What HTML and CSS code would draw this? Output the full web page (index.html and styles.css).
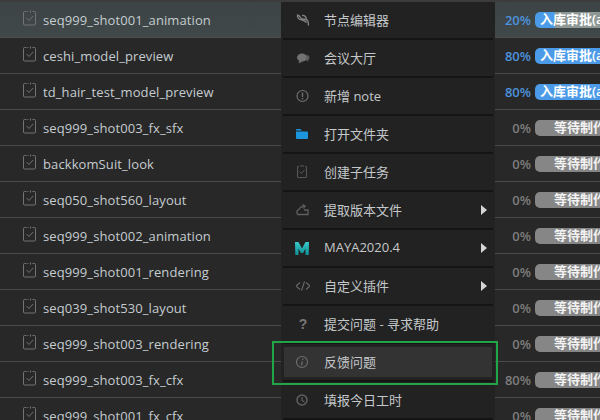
FILE: index.html
```html
<!DOCTYPE html>
<html lang="zh-CN">
<head>
    <meta charset="UTF-8">
    <title>任务列表</title>
    <link rel="stylesheet" href="styles.css">
</head>
<body>
    <svg class="defs">
        <symbol id="taskIcon" viewBox="0 0 13 16">
            <path d="M3.500 1.500H1.500a1 1 0 0 0-1 1v11.500a1 1 0 0 0 1 1h10a1 1 0 0 0 1-1V2.500a1 1 0 0 0-1-1H9.500M4.500 1.500h1M7.500 .5v2M3.500 8l2.500 2.500 4-4.500" fill="none" stroke="currentColor"/>
        </symbol>
        <linearGradient id="mayaFill" x1="0" y1="0" x2="0" y2="1">
            <stop offset="0" stop-color="#3cc8ca"/>
            <stop offset="1" stop-color="#0b8f96"/>
        </linearGradient>
    </svg>

    <div class="taskList">
        <div class="taskRow active"><svg class="taskIcon"><use href="#taskIcon"/></svg><span class="taskName">seq999_shot001_animation</span><span class="percent blue">20%</span><span class="pill partial">入库审批(a</span></div>
        <div class="taskRow"><svg class="taskIcon"><use href="#taskIcon"/></svg><span class="taskName">ceshi_model_preview</span><span class="percent blue">80%</span><span class="pill blueFill">入库审批(a</span></div>
        <div class="taskRow"><svg class="taskIcon"><use href="#taskIcon"/></svg><span class="taskName">td_hair_test_model_preview</span><span class="percent blue">80%</span><span class="pill blueFill">入库审批(a</span></div>
        <div class="taskRow"><svg class="taskIcon"><use href="#taskIcon"/></svg><span class="taskName">seq999_shot003_fx_sfx</span><span class="percent">0%</span><span class="pill">等待制作</span></div>
        <div class="taskRow"><svg class="taskIcon"><use href="#taskIcon"/></svg><span class="taskName">backkomSuit_look</span><span class="percent">0%</span><span class="pill">等待制作</span></div>
        <div class="taskRow"><svg class="taskIcon"><use href="#taskIcon"/></svg><span class="taskName">seq050_shot560_layout</span><span class="percent">0%</span><span class="pill">等待制作</span></div>
        <div class="taskRow"><svg class="taskIcon"><use href="#taskIcon"/></svg><span class="taskName">seq999_shot002_animation</span><span class="percent">0%</span><span class="pill">等待制作</span></div>
        <div class="taskRow"><svg class="taskIcon"><use href="#taskIcon"/></svg><span class="taskName">seq999_shot001_rendering</span><span class="percent">0%</span><span class="pill">等待制作</span></div>
        <div class="taskRow"><svg class="taskIcon"><use href="#taskIcon"/></svg><span class="taskName">seq039_shot530_layout</span><span class="percent">0%</span><span class="pill">等待制作</span></div>
        <div class="taskRow"><svg class="taskIcon"><use href="#taskIcon"/></svg><span class="taskName">seq999_shot003_rendering</span><span class="percent">0%</span><span class="pill">等待制作</span></div>
        <div class="taskRow"><svg class="taskIcon"><use href="#taskIcon"/></svg><span class="taskName">seq999_shot003_fx_cfx</span><span class="percent">80%</span><span class="pill">等待制作</span></div>
        <div class="taskRow"><svg class="taskIcon"><use href="#taskIcon"/></svg><span class="taskName">seq999_shot001_fx_cfx</span><span class="percent">0%</span><span class="pill">等待制作</span></div>
    </div>

    <div class="contextMenu">
        <div class="menuItem">
            <svg class="menuIcon" viewBox="0 0 14 16"><path d="M1 3c2 0 3 1.500 4 3s3 1 5 1.500 2.500 3 2.500 6M1.500 3c-.5 2 1 4 3 4.500s4.500 1 6 3M6 3.500c2-.5 4 1 4.500 3.500" fill="none" stroke="#858585" stroke-width="1.300"/></svg>
            <span class="menuLabel">节点编辑器</span>
        </div>
        <div class="menuItem">
            <svg class="menuIcon" viewBox="0 0 14 16"><ellipse cx="6" cy="7.500" rx="5" ry="4" fill="#727272"/><path d="M3.500 10.500l-1 3 4-2z" fill="#727272"/><path d="M10.500 4.500c2 .5 3 2 3 3.500 0 1-.5 1.500-1.500 2l.5 1.500-2.500-1z" fill="#5c5c5c"/></svg>
            <span class="menuLabel">会议大厅</span>
        </div>
        <div class="menuItem">
            <svg class="menuIcon" viewBox="0 0 14 16"><circle cx="6.500" cy="8" r="5.500" fill="none" stroke="#6f6f6f" stroke-width="1.200"/><path d="M6.500 4.500v4.500M6.500 10v1.500" stroke="#6f6f6f" stroke-width="1.400"/></svg>
            <span class="menuLabel">新增 note</span>
        </div>
        <div class="menuItem">
            <svg class="menuIcon" viewBox="0 0 14 16"><path d="M0 4a1 1 0 0 1 1-1h3.500L6 4.500H0zM0 5.500h11a1 1 0 0 1 1 1V12a1 1 0 0 1-1 1H1a1 1 0 0 1-1-1z" fill="#1b95dc"/></svg>
            <span class="menuLabel">打开文件夹</span>
        </div>
        <div class="menuItem">
            <svg class="menuIcon" viewBox="0 0 14 16"><path d="M3 2.500H2a.5.5 0 0 0-.5.500v10a.5.5 0 0 0 .5.500h8a.5.5 0 0 0 .5-.5V3a.5.5 0 0 0-.5-.5H9M4 2h4M3.500 7.500l2 2 3-3.500" fill="none" stroke="#585858"/></svg>
            <span class="menuLabel">创建子任务</span>
        </div>
        <div class="menuItem hasArrow">
            <svg class="menuIcon" viewBox="0 0 14 16"><path d="M1 12V9l2-2c1-1.500 3-2.500 5-3M6.500 2.500L9 4 7.500 6.500M8 8h4v4.500H1" fill="none" stroke="#5f5f5f" stroke-width="1.300"/></svg>
            <span class="menuLabel">提取版本文件</span>
        </div>
        <div class="menuItem hasArrow">
            <svg class="menuIcon mayaIcon" viewBox="1 2 14 13"><path d="M1 2h3.500L8 8.500 11.500 2H15l-.3 13h-3.200V8.500L9 13H7L4.500 8.500V15H1.300z" fill="url(#mayaFill)"/></svg>
            <span class="menuLabel">MAYA2020.4</span>
        </div>
        <div class="menuItem hasArrow">
            <svg class="menuIcon" viewBox="0 0 14 16"><path d="M4 4.500L0 8l4 3.500M10 4.500L14 8l-4 3.500M8.500 3.500l-3 9" fill="none" stroke="#6a6a6a" stroke-width="1.100"/></svg>
            <span class="menuLabel">自定义插件</span>
        </div>
        <div class="menuItem">
            <span class="menuIcon helpIcon">?</span>
            <span class="menuLabel">提交问题 - 寻求帮助</span>
        </div>
        <div class="menuItem hovered">
            <svg class="menuIcon" viewBox="0 0 14 16"><circle cx="6" cy="8" r="5.500" fill="none" stroke="#6f6f6f" stroke-width="1.100"/><path d="M6.800 4.500v1.300M6.200 7.500l-.7 4" stroke="#6f6f6f" stroke-width="1.300"/></svg>
            <span class="menuLabel">反馈问题</span>
        </div>
        <div class="menuItem">
            <svg class="menuIcon" viewBox="0 0 14 16"><circle cx="6" cy="8" r="5" fill="none" stroke="#606060" stroke-width="1.500"/><path d="M6 5v3.500l2.500 1.500" fill="none" stroke="#606060" stroke-width="1.200"/></svg>
            <span class="menuLabel">填报今日工时</span>
        </div>
    </div>

    <div class="highlightBox"></div>
</body>
</html>
```

FILE: styles.css
```css
html, body {
    height: 100%;
}

body {
    margin: 0;
    background-color: #282828;
    font-family: 'Open Sans', 'Noto Sans CJK SC', sans-serif;
    overflow: hidden;
}

.defs {
    position: absolute;
    width: 0;
    height: 0;
}

.taskList {
    border-top: 2px solid #3c3c3c;
}

.taskRow {
    display: flex;
    align-items: center;
    height: 35px;
    border-bottom: 1px solid #4b4b4b;
    padding-left: 23px;
    white-space: nowrap;
}

.taskRow.active {
    background: linear-gradient(#3c4445, #404849);
}

.taskIcon {
    width: 13px;
    height: 16px;
    margin-top: -4px;
    color: #737373;
    flex-shrink: 0;
}

.taskName {
    width: 450px;
    margin-left: 7px;
    font-size: 13px;
    letter-spacing: 0.1px;
    color: #c5ccd0;
    flex-shrink: 0;
}

.percent {
    width: 38px;
    text-align: right;
    font-size: 13px;
    font-weight: 600;
    color: #7d7d7d;
    flex-shrink: 0;
}

.percent.blue {
    color: #4c92dd;
}

.pill {
    flex-shrink: 0;
    width: 100px;
    height: 16px;
    line-height: 15px;
    margin-left: 4px;
    padding-left: 19px;
    border-radius: 5px;
    background-color: #868686;
    color: #f2f2f2;
    font-size: 13px;
    font-weight: 600;
}

.pill.blueFill {
    padding-left: 5px;
    width: 130px;
    background-color: #4c9be8;
    color: #fff;
}

.pill.partial {
    padding-left: 5px;
    width: 130px;
    background: linear-gradient(90deg, #4c9be8 20px, #8e9895 20px);
    color: #fff;
}

.contextMenu {
    position: absolute;
    left: 281px;
    top: 2px;
    width: 214px;
    background-color: #222222;
    padding: 0 2px;
    box-sizing: border-box;
}

.menuItem {
    display: flex;
    align-items: center;
    height: 36px;
    border-bottom: 2px solid #141414;
    font-size: 13px;
    color: #c4c8ca;
    position: relative;
}

.menuItem.hovered {
    background: linear-gradient(#333333, #333333) center / calc(100% - 2px) 30px no-repeat;
}

.menuLabel {
    margin-top: -2px;
}

.menuIcon {
    width: 14px;
    height: 16px;
    margin-left: 13px;
    margin-right: 14px;
    flex-shrink: 0;
}

.mayaIcon {
    height: 13px;
    margin-left: 12px;
    margin-right: 15px;
}

.helpIcon {
    font-family: 'Liberation Sans', sans-serif;
    font-size: 14px;
    font-weight: bold;
    line-height: 16px;
    text-align: center;
    color: #777777;
}

.hasArrow::after {
    content: "";
    position: absolute;
    right: 6px;
    top: 13px;
    border-left: 6px solid #d5d5d5;
    border-top: 5px solid transparent;
    border-bottom: 5px solid transparent;
}

.highlightBox {
    position: absolute;
    left: 272px;
    top: 341px;
    width: 222px;
    height: 40px;
    border: 2px solid #21a647;
}
```
